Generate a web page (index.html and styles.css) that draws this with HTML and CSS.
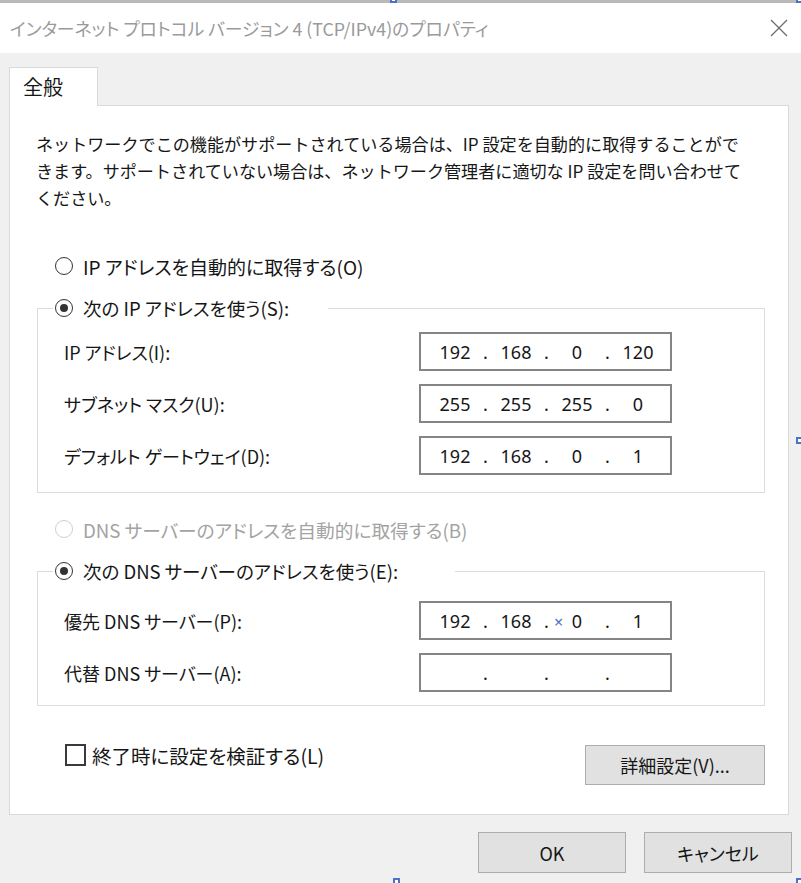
FILE: index.html
```html
<!DOCTYPE html>
<html lang="ja">
<head>
    <meta charset="UTF-8">
    <meta name="viewport" content="width=device-width, initial-scale=1.0">
    <title>インターネット プロトコル バージョン 4 (TCP/IPv4)のプロパティ</title>
    <link rel="stylesheet" href="styles.css">
</head>
<body>
    <div class="frame-edge"></div>

    <div class="titlebar">
        <span class="title">インターネット プロトコル バージョン 4 (TCP/IPv4)のプロパティ</span>
        <svg class="close-icon" width="18" height="18" viewBox="0 0 18 18">
            <path d="M1 1 L17 17 M17 1 L1 17" stroke="#6e6e6e" stroke-width="1.3" fill="none"/>
        </svg>
    </div>

    <div class="client">
        <div class="tabs">
            <div class="tab">全般</div>
        </div>

        <div class="panel">
            <p class="intro">ネットワークでこの機能がサポートされている場合は、IP 設定を自動的に取得することがで<br>きます。サポートされていない場合は、ネットワーク管理者に適切な IP 設定を問い合わせて<br>ください。</p>

            <div class="option">
                <span class="radio"></span>
                <span>IP アドレスを自動的に取得する(O)</span>
            </div>

            <fieldset class="group">
                <legend class="group-title ip-title">
                    <span class="radio checked"></span>
                    <span>次の IP アドレスを使う(S):</span>
                </legend>
                <div class="field-row">
                    <span class="field-label">IP アドレス(I):</span>
                    <div class="ip-box"><span class="octet">192</span><span class="sep">.</span><span class="octet">168</span><span class="sep">.</span><span class="octet">0</span><span class="sep">.</span><span class="octet">120</span></div>
                </div>
                <div class="field-row">
                    <span class="field-label">サブネット マスク(U):</span>
                    <div class="ip-box"><span class="octet">255</span><span class="sep">.</span><span class="octet">255</span><span class="sep">.</span><span class="octet">255</span><span class="sep">.</span><span class="octet">0</span></div>
                </div>
                <div class="field-row">
                    <span class="field-label">デフォルト ゲートウェイ(D):</span>
                    <div class="ip-box"><span class="octet">192</span><span class="sep">.</span><span class="octet">168</span><span class="sep">.</span><span class="octet">0</span><span class="sep">.</span><span class="octet">1</span></div>
                </div>
            </fieldset>

            <div class="option disabled">
                <span class="radio"></span>
                <span>DNS サーバーのアドレスを自動的に取得する(B)</span>
            </div>

            <fieldset class="group dns-group">
                <legend class="group-title dns-title">
                    <span class="radio checked"></span>
                    <span>次の DNS サーバーのアドレスを使う(E):</span>
                </legend>
                <div class="field-row">
                    <span class="field-label">優先 DNS サーバー(P):</span>
                    <div class="ip-box"><span class="octet">192</span><span class="sep">.</span><span class="octet">168</span><span class="sep">.</span><span class="octet">0</span><span class="sep">.</span><span class="octet">1</span><span class="cursor-mark">×</span></div>
                </div>
                <div class="field-row">
                    <span class="field-label">代替 DNS サーバー(A):</span>
                    <div class="ip-box"><span class="octet"></span><span class="sep">.</span><span class="octet"></span><span class="sep">.</span><span class="octet"></span><span class="sep">.</span><span class="octet"></span></div>
                </div>
            </fieldset>

            <div class="panel-footer">
                <div class="checkbox-row">
                    <span class="checkbox"></span>
                    <span>終了時に設定を検証する(L)</span>
                </div>
                <button class="btn advanced-btn">詳細設定(V)...</button>
            </div>
        </div>

        <div class="dialog-buttons">
            <button class="btn">OK</button>
            <button class="btn">キャンセル</button>
        </div>
    </div>

    <!-- selection handles of the capture tool -->
    <span class="handle handle-tl"></span>
    <span class="handle handle-tr"></span>
    <span class="handle handle-mr"></span>
    <span class="handle handle-bl"></span>
    <span class="handle handle-br"></span>
</body>
</html>
```

FILE: styles.css
```css
body {
    margin: 0;
    width: 801px;
    height: 883px;
    overflow: hidden;
    position: relative;
    background-color: #f0f0f0;
    color: #161616;
    font-family: "Noto Sans CJK JP", "Noto Sans", sans-serif;
    font-feature-settings: "palt";
    font-size: 18px;
}
.frame-edge {
    height: 3px;
    background-color: #b9b9b9;
}
.titlebar {
    height: 50px;
    background-color: white;
    display: flex;
    align-items: center;
    justify-content: space-between;
    padding: 0 13px 0 10px;
}
.title {
    color: #9a9a9a;
    font-size: 17.8px;
    white-space: nowrap;
}
.close-icon {
    display: block;
}
.client {
    padding: 14px 0 0 9px;
}
.tabs {
    display: flex;
    height: 38px;
}
.tab {
    width: 89px;
    height: 39px;
    box-sizing: border-box;
    background-color: white;
    border: 1px solid #d9d9d9;
    border-bottom: none;
    padding: 5px 0 0 13px;
    font-size: 20px;
    line-height: 28px;
    position: relative;
    z-index: 1;
}
.panel {
    width: 780px;
    height: 710px;
    box-sizing: border-box;
    background-color: white;
    border: 1px solid #d9d9d9;
    padding-top: 24px;
}
.intro {
    margin: 0 0 41px 26px;
    font-feature-settings: normal;
    font-size: 17.1px;
    line-height: 27px;
    white-space: nowrap;
}
.option, .group-title, .checkbox-row {
    display: flex;
    align-items: center;
    gap: 10px;
    height: 28px;
    white-space: nowrap;
}
.option {
    margin-left: 45px;
    font-size: 19px;
}
.option.disabled {
    color: #a3a3a3;
    margin-top: 22px;
    font-size: 18.7px;
}
.radio {
    width: 18px;
    height: 18px;
    box-sizing: border-box;
    border: 1.5px solid #333;
    border-radius: 50%;
    flex: none;
    display: flex;
    align-items: center;
    justify-content: center;
}
.option.disabled .radio {
    border-color: #cfcfcf;
}
.radio.checked::after {
    content: "";
    width: 8px;
    height: 8px;
    border-radius: 50%;
    background-color: #333;
}
.group {
    margin: 14px 23px 0 27px;
    padding: 10px 0 17px 0;
    border: 1px solid #dcdcdc;
}
.dns-group {
    margin-top: 14px;
    padding-top: 16px;
    padding-bottom: 13px;
}
.group-title {
    margin-left: 15px;
    padding: 0 0 0 2px;
    box-sizing: border-box;
    font-size: 18.5px;
    line-height: 28px;
}
.ip-title {
    width: 275px;
}
.dns-title {
    width: 402px;
}
.field-row {
    display: grid;
    grid-template-columns: 355px 253px;
    align-items: center;
    padding-left: 26px;
}
.field-row + .field-row {
    margin-top: 13px;
}
.field-label {
    white-space: nowrap;
}
.ip-box {
    height: 39px;
    box-sizing: border-box;
    border: 2px solid #858585;
    display: flex;
    align-items: center;
    padding-left: 7px;
    font-family: "Noto Sans", sans-serif;
    font-size: 18px;
    position: relative;
}
.octet {
    width: 54px;
    text-align: center;
}
.sep {
    width: 7px;
    text-align: center;
}
.cursor-mark {
    position: absolute;
    left: 133px;
    top: 8px;
    color: #4a73c5;
    font-size: 16px;
}
.panel-footer {
    display: flex;
    justify-content: space-between;
    align-items: flex-start;
    margin: 35px 23px 0 55px;
}
.checkbox-row {
    gap: 6px;
    font-size: 19.5px;
}
.checkbox {
    width: 21px;
    height: 22px;
    box-sizing: border-box;
    border: 2px solid #3a3a3a;
    flex: none;
}
.btn {
    font-family: inherit;
    font-feature-settings: "palt";
    font-size: 18px;
    color: #161616;
    background-color: #e1e1e1;
    border: 1px solid #adadad;
    width: 148px;
    height: 41px;
    padding: 0;
}
.advanced-btn {
    width: 180px;
    height: 40px;
    margin-top: 4px;
}
.dialog-buttons {
    display: flex;
    justify-content: flex-end;
    gap: 18px;
    margin-top: 17px;
    padding-right: 9px;
}
.handle {
    position: absolute;
    width: 7px;
    height: 7px;
    box-sizing: border-box;
    border: 2px solid #4a73c5;
    background-color: white;
}
.handle-tl { left: 390px; top: -4px; }
.handle-tr { left: 796px; top: -4px; }
.handle-mr { left: 796px; top: 437px; }
.handle-bl { left: 393px; top: 878px; }
.handle-br { left: 796px; top: 878px; }
```
